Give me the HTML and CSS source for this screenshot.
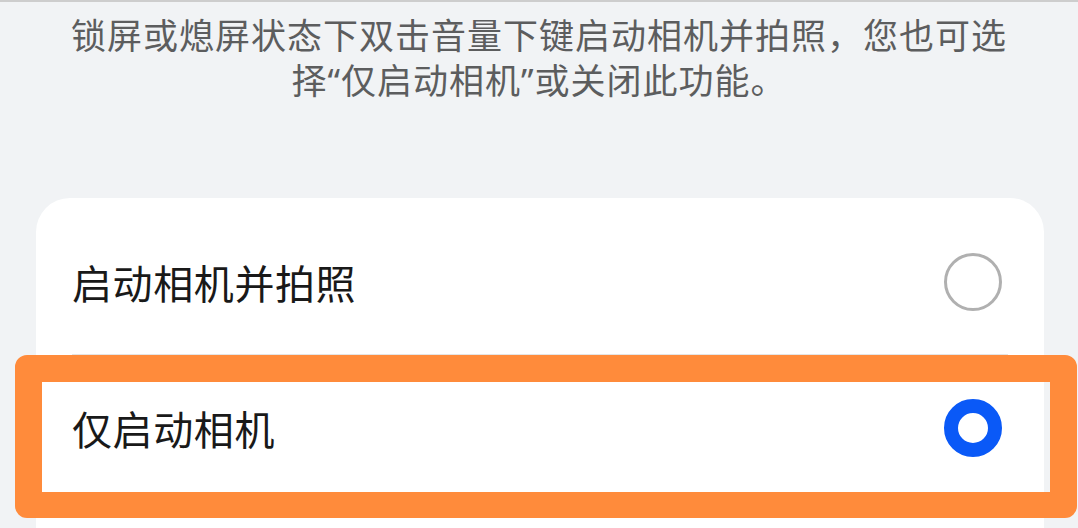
FILE: index.html
```html
<!DOCTYPE html>
<html lang="zh-CN">

<head>
    <meta charset="UTF-8">
    <meta name="viewport" content="width=device-width, initial-scale=1.0">
    <title>快速拍照</title>

    <link rel="stylesheet" href="styles.css">

</head>

<body>

    <p class="intro">锁屏或熄屏状态下双击音量下键启动相机并拍照，您也可选<br>择“仅启动相机”或关闭此功能。</p>

    <div class="card">
        <div class="option">
            <span class="label">启动相机并拍照</span>
            <span class="radio"></span>
        </div>
        <div class="option">
            <span class="label">仅启动相机</span>
            <span class="radio checked"></span>
        </div>

        <!-- annotation box drawn over the selected row -->
        <div class="highlight"></div>
    </div>

</body>
</html>
```

FILE: styles.css
```css
* {
    padding: 0;
    margin: 0;
    box-sizing: border-box;
}

body {
    background-color: #f1f3f5;
    border-top: 2px solid #cdcdcd;
    font-family: "Noto Sans CJK SC", "Noto Sans", sans-serif;
    overflow: hidden;
    height: 528px;
}

.intro {
    padding: 11px 20px 0;
    font-family: "Noto Sans", "Noto Sans CJK SC", sans-serif;
    font-size: 35px;
    line-height: 45px;
    letter-spacing: 1px;
    text-align: center;
    white-space: nowrap;
    color: #5c5d5e;
}

.card {
    position: relative;
    margin: 95px 34px 0 36px;
    padding: 11px 36px 60px;
    background-color: #fff;
    border-radius: 34px;
}

.option {
    display: flex;
    align-items: center;
    justify-content: space-between;
    height: 145px;
}

.option + .option {
    height: 146px;
    border-top: 1px solid #e4e4e4;
}

.label {
    font-size: 40px;
    letter-spacing: 0.6px;
    color: #191919;
}

.radio {
    width: 58px;
    height: 58px;
    margin-right: 6px;
    border: 3px solid #b0b0b0;
    border-radius: 50%;
}

.radio.checked {
    border: 14px solid #0a59f7;
}

.highlight {
    position: absolute;
    left: -21px;
    top: 157px;
    width: 1062px;
    height: 163px;
    border: 27px solid #ff8b3b;
    border-bottom-width: 26px;
    border-radius: 12px;
}
```
